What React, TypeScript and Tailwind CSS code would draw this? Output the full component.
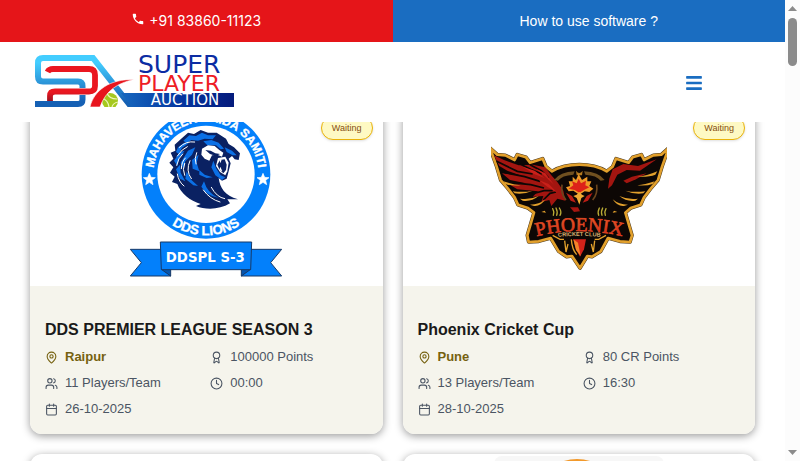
import type { ReactNode } from "react";
import { Award, Calendar, Clock, MapPin, Users } from "lucide-react";
import { FaBars } from "react-icons/fa";
import { MdPhone } from "react-icons/md";

const sans = "'Liberation Sans', Arial, sans-serif";
const wide = "'DejaVu Sans', Verdana, sans-serif";

function BrandLogo() {
  return (
    <svg className="block overflow-visible" width="200" height="54" viewBox="0 0 200 54" role="img" aria-label="Super Player Auction">
      <defs>
        <linearGradient id="brandBlue" x1="0" y1="0" x2="0" y2="52" gradientUnits="userSpaceOnUse">
          <stop offset="0.15" stopColor="#43cdff" />
          <stop offset="0.9" stopColor="#1560b4" />
        </linearGradient>
        <linearGradient id="brandBar" x1="90" y1="0" x2="199" y2="0" gradientUnits="userSpaceOnUse">
          <stop offset="0" stopColor="#1565bd" />
          <stop offset="0.5" stopColor="#0536a0" />
          <stop offset="1" stopColor="#051b7c" />
        </linearGradient>
        <linearGradient id="brandRed" x1="0" y1="11" x2="0" y2="46" gradientUnits="userSpaceOnUse">
          <stop offset="0.75" stopColor="#ea1720" />
          <stop offset="1" stopColor="#9d1220" />
        </linearGradient>
        <clipPath id="brandClip">
          <rect width="200" height="52" />
        </clipPath>
      </defs>
      <g clipPath="url(#brandClip)">
        <path
          d="M0 49H43Q47.500 49 47.500 44.500V31Q47.500 26.500 43 26.500H8Q3 26.500 3 21.500V8Q3 3 8 3H58L98 54"
          fill="none"
          stroke="url(#brandBlue)"
          strokeWidth="6"
        />
        <path d="M86 38H199V52H97Z" fill="url(#brandBar)" />
        <path
          d="M13 17Q14 14 18 14H54Q60 14 60 20V31Q60 36.500 54 36.500H20Q15 36.500 15 41V46"
          fill="none"
          stroke="#fff"
          strokeWidth="6.800"
        />
        <path
          d="M12.500 17Q14 14 18 14H54Q60 14 60 20V31Q60 36.500 54 36.500H20Q15 36.500 15 41V46"
          fill="none"
          stroke="url(#brandRed)"
          strokeWidth="5.800"
        />
        <circle cx="75" cy="46" r="8" fill="#a5c81e" />
        <path d="M67 43q6 2 7 9M72 38q2 6 10 6M77 52q1-4 6-5" stroke="#eef6b8" strokeWidth="1.200" fill="none" />
        <path d="M55 52C59 35 75 24 99 24.500C83 28 71 35 65 52Z" fill="#e8151d" stroke="#fff" strokeWidth="0.600" />
      </g>
      <text x="103" y="18" fontFamily={wide} fontSize="25" fill="#0c2ca3">SUPER</text>
      <text x="103" y="36" fontFamily={wide} fontSize="22" fill="#ee1c25">PLAYER</text>
      <text x="150" y="50" fontFamily={wide} fontSize="15" fill="#fff" textAnchor="middle">AUCTION</text>
    </svg>
  );
}

function LionsCrest() {
  return (
    <svg width="176" height="176" viewBox="26 -6 528 528" role="img" aria-label="DDS Lions crest">
      <defs>
        <path id="crestTop" d="M132 193A158 158 0 0 1 448 193" />
        <path id="crestBottom" d="M107 193A183 183 0 0 0 473 193" />
      </defs>
      <circle cx="290" cy="193" r="193" fill="#0380fb" />
      <circle cx="290" cy="193" r="146" fill="#fff" />
      <g fill="#fff" fontFamily={sans} fontWeight="bold" textAnchor="middle" stroke="#fff">
        <text fontSize="36" strokeWidth="1">
          <textPath href="#crestTop" startOffset="50%">MAHAVEER KRIDA SAMITI</textPath>
        </text>
        <text fontSize="40" strokeWidth="1">
          <textPath href="#crestBottom" startOffset="50%">DDS LIONS</textPath>
        </text>
      </g>
      <g fill="#fff">
        <path d="M120 190l5 12 13 1-10 8 3 13-11-7-11 7 3-13-10-8 13-1z" stroke="#fff" strokeWidth="2" />
        <path d="M461 190l5 12 13 1-10 8 3 13-11-7-11 7 3-13-10-8 13-1z" stroke="#fff" strokeWidth="2" />
      </g>
      <path
        d="M214 88L236 68L254 72L274 60L296 68L322 68L350 86L358 102L374 112L392 130L388 150L376 148L368 138L358 146L364 160L358 184L352 206L338 212L328 204C332 234 346 256 386 268L354 268L362 280C330 300 288 300 260 288L274 282C242 272 214 250 204 222L188 216L196 200L182 188L192 172L180 158L192 146L184 128L198 122L196 104Z"
        fill="#0a2162"
      />
      <g fill="#0b70e6">
        <path d="M222 92l18-16 20 2 18-10 18 8 24 0-10 12-24-2-20 6-20-2-14 10z" />
        <path d="M206 112l18-14 14 2-20 14-10 18-8-6z" />
        <path d="M194 152l18-26 14-4-16 22-6 24z" />
        <path d="M236 122l22-10-10 22-20 20-6 22-8-18z" />
        <path d="M248 150l20-16-6 24 8 26-20-8z" />
        <path d="M200 178l12-14 2 24 14 26-16-8z" />
        <path d="M232 184l12 24 22 20-14-2-24-20z" />
        <path d="M282 94l24-4 22 8 16 18-10 2-14-12-26 0z" />
        <path d="M284 214q10 36 44 50-38-8-52-34z" />
        <path d="M346 112l22 10 14 14-12 0-18-10z" />
        <path d="M270 180l16 14 24 8-18 2-22-10z" />
      </g>
      <g fill="none" stroke="#fff" strokeWidth="3" strokeLinecap="round">
        <path d="M210 112q20-20 46-16M204 138q14-22 30-28M202 166q4-22 18-34M216 176q0-20 12-32M226 196q-8-18 0-36M246 206q-18-24-4-54M204 192q4 24 20 36M282 240q20 28 50 36M306 232q16 30 40 34M262 128q-8 18-2 34" />
      </g>
      <path d="M278 116l18-10 20 2 14 12 12 8-4 12-14-6-16 2-8 16-14-6-10-12z" fill="#fff" />
      <path d="M288 120l16 2 14 8 14 2-12 6-18-6z" fill="#0a2162" />
      <path d="M326 144l22-4 10 18-4 26-6 12-16-10-12-18z" fill="#fff" />
      <path d="M332 150l14-2 6 16-2 16-8 10-12-12-6-14z" fill="#0a2162" />
      <path d="M330 148l3 12 4-11M330 180l3-10 6 14" fill="#fff" />
      <path d="M312 152l8 22 14 22 14 6-10 8-20-14-12-24z" fill="#0b70e6" />
      <g fill="#0380fb" stroke="#173967" strokeWidth="3">
        <path d="M63 418H160V478L184 498H63L96 458Z" />
        <path d="M517 418H420V478L396 498H517L484 458Z" />
        <path d="M156 478L184 498V478Z" fill="#0755ad" />
        <path d="M424 478L396 498V478Z" fill="#0755ad" />
        <path d="M153 396H427L424 479H156Z" />
      </g>
      <text x="288" y="457" fontFamily={wide} fontWeight="bold" fontSize="40" fill="#fff" textAnchor="middle">
        DDSPL S-3
      </text>
    </svg>
  );
}

const phoenixOutline =
  "M30 84L52 104L76 106L104 120L112 104L138 112L150 128L188 116L198 140L216 154Q250 134 298 134Q346 134 380 154L398 140L408 116L446 128L458 112L484 104L492 120L520 106L544 104L566 84L546 140L534 180L512 206L492 232L482 254L452 264L436 278L456 346L450 366L420 364L384 354L362 394L336 410L322 408L300 444L276 408L260 410L236 394L212 354L176 364L146 366L142 346L162 278L144 264L114 254L104 232L84 206L62 180L50 140Z";

function PhoenixCrest() {
  return (
    <svg width="176" height="176" viewBox="33 -36 528 528" role="img" aria-label="Phoenix Cricket Club crest">
      <defs>
        <linearGradient id="phoenixText" x1="0" y1="290" x2="0" y2="350" gradientUnits="userSpaceOnUse">
          <stop offset="0" stopColor="#f0692c" />
          <stop offset="1" stopColor="#c91a14" />
        </linearGradient>
        <path id="phoenixArc" d="M150 354Q298 312 446 354" />
        <path id="phoenixSub" d="M210 352Q298 344 386 352" />
      </defs>
      <path d={phoenixOutline} fill="#0d0705" stroke="#4d3a20" strokeWidth="11" strokeLinejoin="round" />
      <path d={phoenixOutline} fill="#0d0705" stroke="#e2a02c" strokeWidth="8" strokeLinejoin="round" />
      <g fill="#a31510">
        <path d="M42 106L72 120L116 136L158 134L196 142L214 166L232 186L250 212L256 242L232 236L214 258L208 240L184 246L190 228L158 230L174 214L112 208L92 196L138 190L90 180L66 160L120 166L82 152L58 138Z" />
        <path d="M388 176L398 148L430 132L474 138L530 118L480 152L440 150L412 164L396 196L384 206Z" />
        <path d="M430 182L456 170L500 160L468 178L440 190Z" />
      </g>
      <g fill="none" stroke="#0d0705" strokeWidth="5">
        <path d="M50 124l62 30 46 8M74 158l60 12 46 14M92 188l60 6 40 10M112 128l40 20 34 14M150 134l34 18 22 22M156 222l36-10 26 0M190 240l20-20 18-4" />
      </g>
      <g fill="#c9201a">
        <path d="M128 140l36 12 30 22-32-12zM168 146l28 14 26 34-28-26zM176 180l30 12 26 26-30-18z" />
      </g>
      <g fill="#e2a02c">
        <path d="M70 184q30 10 52 12-30 2-46-4zM98 214q34 4 60-2-26 12-54 8zM120 236q30 4 56-8-22 18-48 14zM150 254q28 0 46-16-14 22-34 20zM524 184q-30 10-52 12 30 2 46-4zM496 214q-34 4-60-2 26 12 54 8zM474 236q-30 4-56-8 22 18 48 14zM444 254q-28 0-46-16 14 22 34 20zM532 154q-32 14-60 16 34 2 54-6z" />
      </g>
      <path d="M222 180Q240 156 284 154L280 164Q246 166 234 182ZM374 180Q356 156 312 154L316 164Q350 166 362 182Z" fill="#705020" />
      <path d="M288 152q10 14 20 0l-2 14h-16z" fill="#b47920" />
      <path d="M246 194q-4 28 12 46M350 194q4 28-12 46" fill="none" stroke="#6a451d" strokeWidth="5" />
      <path d="M296 162L306 180L322 170L322 184L334 184L328 198L340 206L328 216L314 214L298 224L280 212L266 214L258 202L270 198L266 184L278 184L278 170L288 180Z" fill="#ef9a27" />
      <path d="M296 176L303 190L318 182L316 196L328 202L312 210L298 218L284 210L266 206L280 196L276 184L290 190Z" fill="#dd2219" />
      <path d="M258 218l18 10 12 20-16-6zM338 218l-18 10-12 20 16-6z" fill="#b91d15" />
      <path d="M290 224l8-8 8 8 8 4-10 6-6 20-8-20-10-6z" fill="#efab35" />
      <path d="M270 262l24 0 6 12-18 2z" fill="#a61611" />
      <g fill="none" stroke="#b9ab35" strokeWidth="4" strokeLinecap="round">
        <path d="M218 266q6 10 2 20M228 264q6 12 2 22M238 264q8 12 2 22M358 264q-6 12-2 22M368 264q-6 12-2 22M378 266q-6 10-2 20" />
      </g>
      <path d="M184 276l10-4 4 6zM412 276l-10-4-4 6z" fill="#e2a02c" />
      <path d="M280 358h38l-6 30-12 22-12-22z" fill="#d3231a" />
      <path d="M280 358l14 10 8 40-14-18z" fill="#f2842a" />
      <g fill="none" stroke="#e2a02c" strokeWidth="4">
        <path d="M218 346l22 12 12 0M378 346l-22 12-12 0M254 362l4 34 6-24M344 362l-4 34-6-24M274 358q2 30 16 46" />
      </g>
      <text fontFamily="'Liberation Serif', 'Times New Roman', serif" fontSize="59" fill="url(#phoenixText)" stroke="#dc4322" strokeWidth="2" textAnchor="middle">
        <textPath href="#phoenixArc" startOffset="50%">PHOENIX</textPath>
      </text>
      <text fontFamily={sans} fontSize="17" fontWeight="bold" fill="#d6b071" textAnchor="middle">
        <textPath href="#phoenixSub" startOffset="50%">CRICKET CLUB</textPath>
      </text>
    </svg>
  );
}

function SunCrest() {
  return (
    <svg width="176" height="176" viewBox="0 0 176 176" aria-hidden="true">
      <rect x="3" width="170" height="176" rx="8" fill="#f7f7f7" />
      <circle cx="86" cy="47" r="44" fill="#f2992b" />
      <circle cx="86" cy="50" r="41" fill="#fff" />
    </svg>
  );
}

type Tournament = {
  name: string;
  city: string;
  points: string;
  players: string;
  time: string;
  date: string;
  crest: ReactNode;
};

const tournaments: Tournament[] = [
  {
    name: "DDS PREMIER LEAGUE SEASON 3",
    city: "Raipur",
    points: "100000 Points",
    players: "11 Players/Team",
    time: "00:00",
    date: "26-10-2025",
    crest: <LionsCrest />,
  },
  {
    name: "Phoenix Cricket Cup",
    city: "Pune",
    points: "80 CR Points",
    players: "13 Players/Team",
    time: "16:30",
    date: "28-10-2025",
    crest: <PhoenixCrest />,
  },
];

const cardClass = "relative overflow-hidden rounded-xl bg-white shadow-[0_2px_8px_rgba(0,0,0,0.4)]";

function TournamentCard({ item }: { item: Tournament }) {
  return (
    <article className={cardClass}>
      <div className="flex justify-center py-0.5">{item.crest}</div>
      <span className="absolute top-2.5 right-2.5 rounded-full border border-[#eab308] bg-[#fef9c3] px-[10px] py-[3px] text-[9px] leading-4 text-[#854d0e] shadow-sm">
        Waiting
      </span>
      <div className="bg-[#f5f4ec] px-[15px] pt-8 pb-[15px]">
        <h2 className="text-base leading-6 font-bold text-[#1a1a1a]">{item.name}</h2>
        <ul className="mt-[5px] grid grid-cols-2 gap-x-2 gap-y-[6px] text-[13px] leading-5 text-[#4b5563]">
          <li className="flex items-center gap-[7px] font-bold text-[#75610f]">
            <MapPin size={13} />
            {item.city}
          </li>
          <li className="flex items-center gap-[7px]">
            <Award size={13} />
            {item.points}
          </li>
          <li className="flex items-center gap-[7px]">
            <Users size={13} />
            {item.players}
          </li>
          <li className="flex items-center gap-[7px]">
            <Clock size={13} />
            {item.time}
          </li>
          <li className="flex items-center gap-[7px]">
            <Calendar size={13} />
            {item.date}
          </li>
        </ul>
      </div>
    </article>
  );
}

function ScrollTrack() {
  return (
    <div className="flex w-[15px] shrink-0 flex-col items-center bg-[#fcfcfc] py-1.5" aria-hidden="true">
      <svg width="9" height="5" viewBox="0 0 9 5">
        <path d="M0 5L4.500 0L9 5Z" fill="#8b8b8b" />
      </svg>
      <div className="mt-[7px] h-12 w-[9px] rounded-full bg-[#8b8b8b]" />
      <svg className="mt-auto" width="9" height="5" viewBox="0 0 9 5">
        <path d="M0 0L4.500 5L9 0Z" fill="#8b8b8b" />
      </svg>
    </div>
  );
}

export default function App() {
  return (
    <div className="flex h-screen overflow-hidden bg-white font-['Liberation_Sans',Arial,sans-serif]">
      <div className="flex min-w-0 flex-1 flex-col">
        <div className="grid shrink-0 grid-cols-2 text-center text-sm leading-[42px] text-white">
          <a href="tel:+918386011123" className="bg-[#e51519] font-['Inter',sans-serif]">
            <MdPhone size={14} className="mr-1 inline-block align-baseline" />
            +91 83860-11123
          </a>
          <a href="#how-to" className="bg-[#1a6dc1]">
            How to use software ?
          </a>
        </div>
        <header className="flex h-20 shrink-0 items-center justify-between pr-[82px] pl-[35px]">
          <a href="#home">
            <BrandLogo />
          </a>
          <button type="button" aria-label="Open menu" className="pt-0.5 text-[#1a6dc1]">
            <FaBars size={18} />
          </button>
        </header>
        <main className="min-h-0 flex-1 overflow-hidden">
          <div className="-mt-4 grid grid-cols-2 gap-5 px-[30px]">
            {tournaments.map((item) => (
              <TournamentCard key={item.name} item={item} />
            ))}
            <article className={cardClass}>
              <div className="h-44" />
            </article>
            <article className={cardClass}>
              <div className="flex justify-center py-0.5">
                <SunCrest />
              </div>
            </article>
          </div>
        </main>
      </div>
      <ScrollTrack />
    </div>
  );
}
